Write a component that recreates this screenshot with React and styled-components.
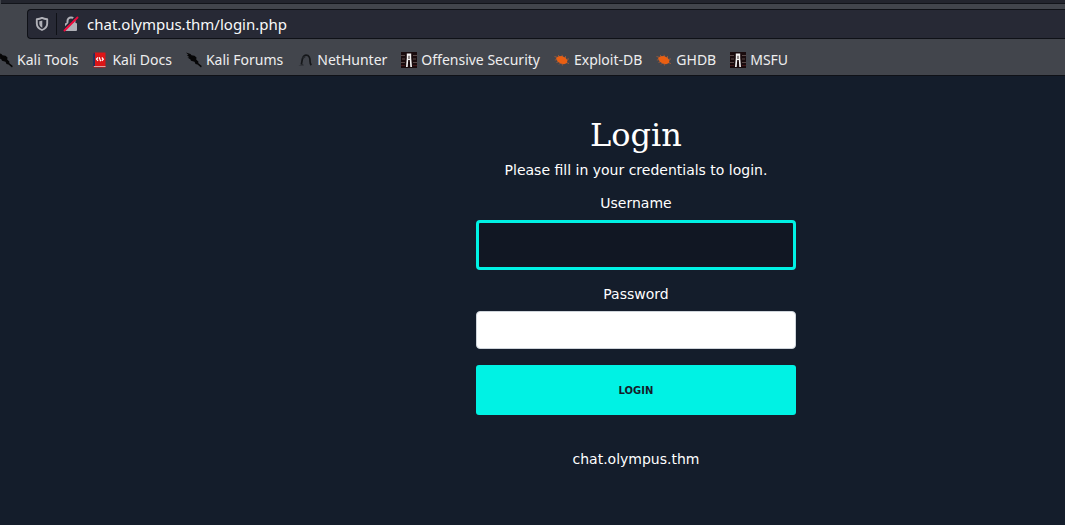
import React, { useState } from 'react';
import styled, { createGlobalStyle } from 'styled-components';

const GlobalStyle = createGlobalStyle`
  * {
    box-sizing: border-box;
  }

  body {
    margin: 0;
    background: #141d2b;
    overflow-x: hidden;
  }
`;

const Page = styled.div`
  min-height: 100vh;
  overflow: hidden;
  color: #ffffff;
  font-family: 'DejaVu Sans', sans-serif;
  font-size: 14px;
  line-height: 21px;
`;

const Chrome = styled.header`
  background: #42454c;
  border-bottom: 1px solid #0f1117;
  font-family: 'Noto Sans', sans-serif;
  font-size: 14px;
  line-height: 20px;
`;

const TabStrip = styled.div`
  height: 4px;
  margin-left: 1px;
  background: #23252e;
  border-bottom: 1px solid #12141a;
`;

const Toolbar = styled.div`
  padding: 5px 0 5px 27px;
`;

const UrlBar = styled.div`
  display: flex;
  align-items: center;
  height: 30px;
  padding-left: 6px;
  background: #272935;
  border: 1px solid #0f1117;
  border-right: none;
  border-radius: 4px 0 0 4px;
`;

const Divider = styled.span`
  width: 1px;
  height: 22px;
  margin: 0 6px;
  background: #0f1117;
`;

const UrlInput = styled.input`
  flex: 1;
  min-width: 0;
  margin-left: 8px;
  padding: 0;
  border: none;
  outline: none;
  background: transparent;
  color: #f9f9fa;
  font: inherit;
  font-size: 15px;
`;

const Bookmarks = styled.nav`
  display: flex;
  align-items: center;
  gap: 14px;
  height: 31px;
  margin-left: -3px;
`;

const Bookmark = styled.a`
  display: flex;
  align-items: center;
  gap: 4px;
  color: #eeeeef;
  text-decoration: none;
  white-space: nowrap;
`;

const Icon = styled.svg`
  flex: none;
  width: 16px;
  height: 16px;
`;

const Main = styled.main`
  display: flex;
  flex-direction: column;
  align-items: center;
  padding: 40px 0 32px 207px;
  text-align: center;
`;

const Title = styled.h1`
  margin: 0 0 6px;
  font-family: 'DejaVu Serif', serif;
  font-size: 32px;
  font-weight: 400;
  line-height: 38px;
`;

const Text = styled.p`
  margin: 0;
`;

const Form = styled.form`
  display: flex;
  flex-direction: column;
  width: 100%;
  max-width: 320px;
  margin: 12px 0 34px;
`;

const Label = styled.label`
  margin-bottom: 6px;
`;

const Field = styled.input`
  width: 100%;
  height: ${({ $active }) => ($active ? '50px' : '38px')};
  margin-bottom: ${({ $active }) => ($active ? '14px' : '16px')};
  padding: 6px 12px;
  border: ${({ $active }) => ($active ? '3px solid #00f2e4' : '1px solid #ced4da')};
  border-radius: 4px;
  outline: none;
  background: ${({ $active }) => ($active ? '#111723' : '#ffffff')};
  color: ${({ $active }) => ($active ? '#ffffff' : '#111723')};
  font: inherit;
`;

const LoginButton = styled.button`
  height: 50px;
  border: none;
  border-radius: 3px;
  background: #00f2e4;
  color: #141d2b;
  font-family: inherit;
  font-size: 10px;
  font-weight: 700;
  text-transform: uppercase;
  cursor: pointer;
`;

const ShieldIcon = () => (
  <Icon viewBox="0 0 16 16" aria-hidden="true">
    <path
      d="M8 1.9c1.800.9 3.400 1.200 5.200 1.300v4.200c0 3-1.900 5.200-5.200 6.600-3.300-1.400-5.200-3.600-5.200-6.600V3.200C4.600 3.100 6.200 2.800 8 1.900z"
      fill="none"
      stroke="#b1b1b8"
      strokeWidth="1.9"
      strokeLinejoin="round"
    />
    <path d="M8.300 4.500v7.200C6.300 10.700 5.300 9.200 5.300 7.400V5.300C6.300 5.200 7.400 5 8.300 4.500z" fill="#b1b1b8" />
  </Icon>
);

const InsecureIcon = () => (
  <Icon viewBox="0 0 16 16" aria-hidden="true">
    <path d="M4.500 7.500V5a3.500 3.500 0 0 1 7 0v2.500" fill="none" stroke="#b1b1b8" strokeWidth="2" />
    <rect x="2" y="7" width="12" height="8" rx="1" fill="#b1b1b8" />
    <path d="M1 12.800 12.800 1" stroke="#272935" strokeWidth="2" />
    <path d="M1.500 14.500 14.500 1.500" stroke="#f0093c" strokeWidth="1.900" strokeLinecap="round" />
  </Icon>
);

const KaliIcon = () => (
  <Icon viewBox="0 0 16 16" aria-hidden="true">
    <path
      d="M0 .5 4.500 2 5.500 3.200 8.500 3.800 10.500 5.500 10.200 7.500 12.500 9.800 12.200 11 15.800 14 15 15.500 11.500 12.500 9.500 12 8.500 9.800 5 8.800 4.500 7.500 1.500 5.500 3.500 5.200.8 3.200 2.500 3z"
      fill="#060607"
    />
  </Icon>
);

const DocsIcon = () => (
  <Icon viewBox="0 0 16 16" aria-hidden="true">
    <path d="M1 2.500A2 2 0 0 1 3 .5h10.500v15H3a2 2 0 0 1-2-2z" fill="#dc1517" />
    <path d="M1 2.500A2 2 0 0 1 3 .5V14H1z" fill="#25325c" />
    <path d="M2 14h11.500v1H2z" fill="#dba4a4" />
    <path
      d="M6 5.500 4.500 7 6 8.900M9.800 5.500 11.300 7.200 9.800 8.900M7.200 5.200l1.400 4"
      fill="none"
      stroke="#ffffff"
      strokeWidth="1.200"
    />
  </Icon>
);

const NetHunterIcon = () => (
  <Icon viewBox="0 0 16 16" aria-hidden="true">
    <path
      d="M4.300 12.500C5.500 9 4.500 3.200 9 3.200c3.200 0 4.200 3 4 6 0 1.600.4 2.800 1.300 3.900"
      fill="none"
      stroke="#15171a"
      strokeWidth="1.700"
    />
    <path d="M1.500 13.500 6 12l.8 1.500zM5 5.500l3-1.800.5 1.500L6 7z" fill="#24272b" />
  </Icon>
);

const OffSecIcon = () => (
  <Icon viewBox="0 0 16 16" aria-hidden="true">
    <rect width="16" height="16" fill="#190b0d" />
    <path d="M0 3.500h4M12 3.500h4M1 7h3M12 7h3M0 10.500h4M12 10.500h4" stroke="#594847" />
    <path d="M0 13.500h4M12 13.500h4" stroke="#421618" />
    <path d="M5.800 1.500h4.400V6l.8 9H9.300L8.800 8H7.200L6.700 15H5l.8-9z" fill="#f5f3f3" />
    <path d="M7.300 3.800h1.400V7H7.300z" fill="#6b6060" />
  </Icon>
);

const BugIcon = () => (
  <Icon viewBox="0 0 16 16" aria-hidden="true">
    <path
      d="M2 6 4.500 4.300 8 4 11.500 5.800 13.300 8.300 13 11 10 12.300 6.500 11.500 3.500 9.300z"
      fill="#ea5f12"
    />
    <path
      d="M.5 4.500 4 5.500M4 3l2 2M8 2.800l.5 2M11.500 4v2.500M12 7.500l3-.6M.8 8l3-.4M2.500 10.500l2.500-.8M5 12.500l1.500-1.500M8.500 13.500l-.5-2M12 10.200l3 1.500"
      stroke="#c96431"
      strokeWidth=".6"
    />
  </Icon>
);

const bookmarks = [
  { title: 'Kali Tools', Glyph: KaliIcon },
  { title: 'Kali Docs', Glyph: DocsIcon },
  { title: 'Kali Forums', Glyph: KaliIcon },
  { title: 'NetHunter', Glyph: NetHunterIcon },
  { title: 'Offensive Security', Glyph: OffSecIcon },
  { title: 'Exploit-DB', Glyph: BugIcon },
  { title: 'GHDB', Glyph: BugIcon },
  { title: 'MSFU', Glyph: OffSecIcon },
];

const BrowserChrome = () => {
  const [url, setUrl] = useState('chat.olympus.thm/login.php');

  return (
    <Chrome>
      <TabStrip />
      <Toolbar>
        <UrlBar>
          <ShieldIcon />
          <Divider />
          <InsecureIcon />
          <UrlInput aria-label="Address" value={url} onChange={(e) => setUrl(e.target.value)} />
        </UrlBar>
      </Toolbar>
      <Bookmarks>
        {bookmarks.map(({ title, Glyph }) => (
          <Bookmark href="#" key={title}>
            <Glyph />
            {title}
          </Bookmark>
        ))}
      </Bookmarks>
    </Chrome>
  );
};

const App = () => {
  const [username, setUsername] = useState('');
  const [password, setPassword] = useState('');

  const handleSubmit = (e) => {
    e.preventDefault();
  };

  return (
    <>
      <GlobalStyle />
      <Page>
        <BrowserChrome />
        <Main>
          <Title>Login</Title>
          <Text>Please fill in your credentials to login.</Text>
          <Form onSubmit={handleSubmit}>
            <Label htmlFor="username">Username</Label>
            <Field
              $active
              id="username"
              type="text"
              value={username}
              onChange={(e) => setUsername(e.target.value)}
            />
            <Label htmlFor="password">Password</Label>
            <Field
              id="password"
              type="password"
              value={password}
              onChange={(e) => setPassword(e.target.value)}
            />
            <LoginButton type="submit">Login</LoginButton>
          </Form>
          <Text>chat.olympus.thm</Text>
        </Main>
      </Page>
    </>
  );
};

export default App;
